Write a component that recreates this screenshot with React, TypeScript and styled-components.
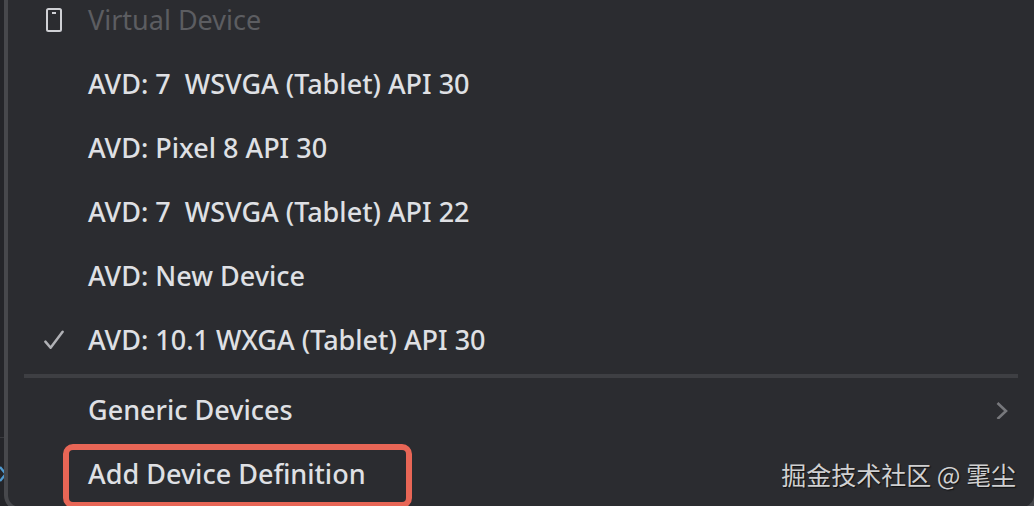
import React from "react";
import styled, { createGlobalStyle } from "styled-components";

const Global = createGlobalStyle`
  * { box-sizing: border-box; }
  html { background: #242529; overflow: hidden; }
  body { margin: 0; font-family: "Noto Sans", "Open Sans", sans-serif; }
`;

const Page = styled.main`
  position: relative;
  height: 100vh;
  overflow: hidden;
  background: #242529;
`;

const Menu = styled.div`
  display: flex;
  flex-direction: column;
  margin: 0 -4px 0 4px;
  border: solid #47484c;
  border-width: 0 4px 4px;
  border-radius: 0 0 16px 16px;
  background: #2b2c30;
`;

const Heading = styled.div`
  display: flex;
  align-items: center;
  height: 53px;
  padding: 0 16px 14px 0;
  color: #5c5d61;
  font-size: 27px;
  line-height: 36px;
`;

const Item = styled.button`
  display: flex;
  align-items: center;
  width: 100%;
  height: 64px;
  padding: 0 26px 2px 0;
  border: 0;
  background: none;
  color: #dfe0e4;
  font-family: inherit;
  font-size: 27px;
  font-weight: 500;
  line-height: 36px;
  text-align: left;
  white-space: pre;
`;

const Gutter = styled.span`
  display: flex;
  align-items: center;
  justify-content: center;
  flex: none;
  width: 80px;
  padding-left: 12px;
`;

const Label = styled.span`
  flex: 1;
`;

const Separator = styled.hr`
  align-self: stretch;
  height: 4px;
  margin: 1px 16px;
  border: 0;
  background: #3e3f43;
`;

const Highlight = styled.div`
  position: absolute;
  left: 63px;
  top: 444px;
  width: 349px;
  height: 64px;
  border: 6px solid #e86656;
  border-radius: 10px;
  pointer-events: none;
`;

const Watermark = styled.div`
  position: absolute;
  right: 18px;
  bottom: 14px;
  color: #d0d0d1;
  font-family: "Noto Sans CJK SC", sans-serif;
  font-size: 25px;
  line-height: 36px;
  text-shadow: 1px 1px 1px #111;
`;

const Backdrop = styled.svg`
  position: absolute;
  left: 0;
  top: 437px;
`;

const PhoneIcon = () => (
  <svg width="16" height="24" viewBox="0 0 16 24" fill="none" stroke="#d0d1d5" strokeWidth="2">
    <rect x="1" y="1" width="14" height="22" rx="1.5" />
    <path d="M6 5h4" />
  </svg>
);

const CheckIcon = () => (
  <svg width="20" height="20" viewBox="0 0 20 20" fill="none" stroke="#b0b1b5" strokeWidth="2.5" strokeLinecap="round" strokeLinejoin="round">
    <path d="M1.4 11.6 6.6 17.8 18.6 1.8" />
  </svg>
);

const ChevronIcon = () => (
  <svg width="12" height="18" viewBox="0 0 12 18" fill="none" stroke="#77787c" strokeWidth="2.6">
    <path d="M1.5 2 10 10 1.5 18" />
  </svg>
);

const devices = [
  "AVD: 7  WSVGA (Tablet) API 30",
  "AVD: Pixel 8 API 30",
  "AVD: 7  WSVGA (Tablet) API 22",
  "AVD: New Device",
  "AVD: 10.1 WXGA (Tablet) API 30",
];
const selected = 4;

export default function App() {
  return (
    <Page>
      <Global />
      <Backdrop width="4" height="60" fill="none">
        <path d="M0 .5h4" stroke="#38393d" />
        <path d="M0 30l5 6M0 44l5-6" stroke="#4f9ad0" strokeWidth="2.4" />
      </Backdrop>
      <Menu role="menu">
        <Heading>
          <Gutter><PhoneIcon /></Gutter>
          <Label>Virtual Device</Label>
        </Heading>
        {devices.map((name, i) => (
          <Item key={name} role="menuitemradio" aria-checked={i === selected}>
            <Gutter>{i === selected && <CheckIcon />}</Gutter>
            <Label>{name}</Label>
          </Item>
        ))}
        <Separator />
        <Item role="menuitem" aria-haspopup="menu">
          <Gutter />
          <Label>Generic Devices</Label>
          <ChevronIcon />
        </Item>
        <Item role="menuitem">
          <Gutter />
          <Label>Add Device Definition</Label>
        </Item>
      </Menu>
      <Highlight />
      <Watermark>掘金技术社区 @ 雮尘</Watermark>
    </Page>
  );
}
